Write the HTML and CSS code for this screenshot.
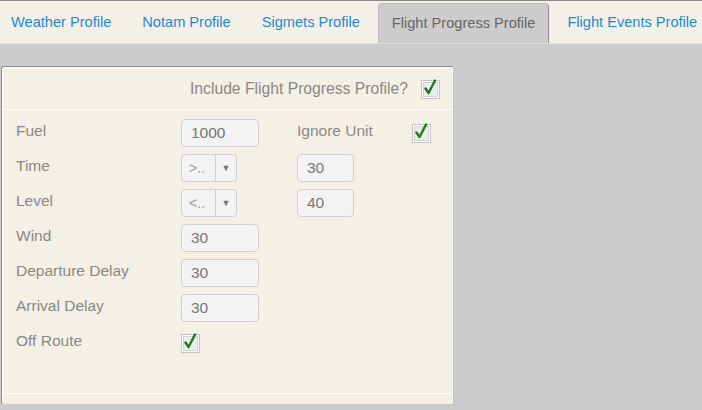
FILE: index.html
```html
<!DOCTYPE html>
<html>
<head>
<meta charset="utf-8">
<link rel="stylesheet" href="styles.css">
</head>
<body>
<div class="tabs">
  <a class="tab first">Weather Profile</a>
  <a class="tab">Notam Profile</a>
  <a class="tab">Sigmets Profile</a>
  <a class="tab active">Flight Progress Profile</a>
  <a class="tab">Flight Events Profile</a>
</div>
<div class="content">
  <div class="panel">
    <div class="panel-head">
      <span class="head-label">Include Flight Progress Profile?</span>
      <span class="cb"><svg viewBox="0 0 18 18" width="18" height="18"><path d="M4.5 9.5 L7.6 14 L14 1.5" fill="none" stroke="#1c7c1c" stroke-width="2.4" stroke-linecap="round" stroke-linejoin="round"/></svg></span>
    </div>
    <div class="panel-body">
      <span class="lbl">Fuel</span>
      <input class="txt" value="1000">
      <span class="lbl">Ignore Unit</span>
      <span class="cb"><svg viewBox="0 0 18 18" width="18" height="18"><path d="M4.5 9.5 L7.6 14 L14 1.5" fill="none" stroke="#1c7c1c" stroke-width="2.4" stroke-linecap="round" stroke-linejoin="round"/></svg></span>

      <span class="lbl">Time</span>
      <div class="sel"><span class="sel-val">&gt;..</span><span class="sel-arrow">&#9660;</span></div>
      <input class="txt short" value="30">
      <span></span>

      <span class="lbl">Level</span>
      <div class="sel"><span class="sel-val">&lt;..</span><span class="sel-arrow">&#9660;</span></div>
      <input class="txt short" value="40">
      <span></span>

      <span class="lbl">Wind</span>
      <input class="txt" value="30">
      <span></span><span></span>

      <span class="lbl">Departure Delay</span>
      <input class="txt" value="30">
      <span></span><span></span>

      <span class="lbl">Arrival Delay</span>
      <input class="txt" value="30">
      <span></span><span></span>

      <span class="lbl">Off Route</span>
      <span class="cb"><svg viewBox="0 0 18 18" width="18" height="18"><path d="M4.5 9.5 L7.6 14 L14 1.5" fill="none" stroke="#1c7c1c" stroke-width="2.4" stroke-linecap="round" stroke-linejoin="round"/></svg></span>
      <span></span><span></span>
    </div>
    <div class="panel-foot"></div>
  </div>
</div>
</body>
</html>
```

FILE: styles.css
```css
html, body {
  margin: 0;
  padding: 0;
  background: #cccccc;
  font-family: "Liberation Sans", Arial, sans-serif;
  font-size: 15.5px;
}

.tabs {
  display: flex;
  gap: 5px;
  height: 42px;
  background: #f4f0e6;
  border-top: 1px solid #8a8a8a;
  border-bottom: 1px solid #dedede;
  overflow: hidden;
  font-size: 14.6px;
}

.tab {
  display: flex;
  align-items: center;
  flex-shrink: 0;
  white-space: nowrap;
  padding: 0 13px;
  color: #1b8bd6;
  cursor: pointer;
}

.tab.first {
  padding-left: 11px;
}

.tab.active {
  align-self: flex-end;
  height: 41px;
  margin-bottom: -1px;
  padding: 0 13px 3px 13px;
  background: #cccccc;
  color: #666666;
  border: 1px solid #bdbdbd;
  border-right-color: #8f8f8f;
  border-bottom: none;
  border-radius: 4px 4px 0 0;
  box-sizing: border-box;
}

.content {
  padding: 22px 0 0 1px;
}

.panel {
  width: 453px;
  box-sizing: border-box;
  background: #f4f0e6;
  border: 1px solid #c8c8c8;
  border-top-color: #8c8c8c;
  border-left-color: #8c8c8c;
  border-radius: 3px;
  box-shadow: inset 1px 1px 0 #ffffff, inset -1px 0 0 #ffffff;
}

.panel-head {
  height: 43px;
  display: flex;
  justify-content: flex-end;
  align-items: center;
  gap: 13px;
  padding-right: 13px;
  padding-top: 2px;
  box-sizing: border-box;
  border-bottom: 1px solid #ffffff;
  color: #888888;
  font-size: 15.7px;
}

.panel-body {
  height: 284px;
  box-sizing: border-box;
  padding: 9px 14px 0 14px;
  display: grid;
  grid-template-columns: 165px 116px 115px auto;
  grid-auto-rows: 28px;
  row-gap: 7px;
  align-items: center;
  border-bottom: 1px solid #ffffff;
}

.panel-foot {
  height: 10px;
}

.lbl {
  color: #888888;
  margin-top: -4px;
}

.txt {
  width: 78px;
  height: 28px;
  box-sizing: border-box;
  border: 1px solid #cfcfcf;
  border-radius: 4px;
  background: #f3f3f3;
  padding: 0 0 0 9px;
  font-family: "Liberation Sans", Arial, sans-serif;
  font-size: 15.5px;
  color: #777777;
  outline: none;
}

.txt.short {
  width: 57px;
}

.sel {
  width: 56px;
  height: 28px;
  box-sizing: border-box;
  border: 1px solid #cfcfcf;
  border-radius: 4px;
  background: #f3f3f3;
  display: flex;
}

.sel-val {
  width: 34px;
  padding-left: 7px;
  box-sizing: border-box;
  border-right: 1px solid #cfcfcf;
  display: flex;
  align-items: center;
  color: #999999;
  font-size: 14px;
}

.sel-arrow {
  flex: 1;
  display: flex;
  align-items: center;
  justify-content: center;
  color: #777777;
  font-size: 9px;
}

.cb {
  width: 19px;
  height: 19px;
  box-sizing: border-box;
  border: 1px solid #c2c2c2;
  background: #ececec;
  box-shadow: inset 0 0 0 1px #ffffff, inset 0 0 0 2px #d2d2d2;
  position: relative;
  display: block;
}

.cb svg {
  position: absolute;
  left: -1px;
  top: -2px;
}
```
